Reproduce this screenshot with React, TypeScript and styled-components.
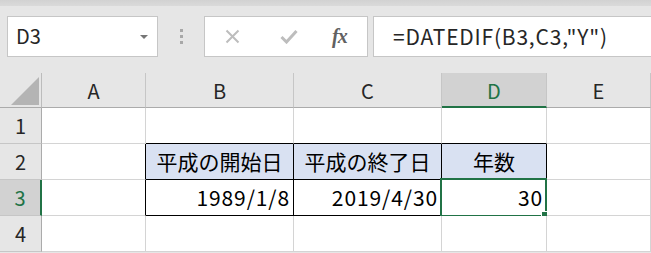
import React from 'react'
import styled, { createGlobalStyle } from 'styled-components'

const GlobalStyle = createGlobalStyle`
    html, body {
        margin: 0;
        padding: 0;
        background: #e6e6e6;
        overflow: hidden;
    }
    body {
        font-family: 'Noto Sans CJK JP', 'Noto Sans', sans-serif;
    }
`

const GREEN = '#217346'
const FONT = `'Noto Sans CJK JP', 'Noto Sans', sans-serif`

const Window = styled.div`
    width: 651px;
    height: 253px;
    display: flex;
    flex-direction: column;
    background: #e6e6e6;
`

const TopStrip = styled.div`
    height: 6px;
    background: linear-gradient(#d2d2d2, #dadada);
`

const FormulaBar = styled.div`
    display: flex;
    align-items: center;
    height: 41px;
    margin-top: 10px;
    margin-bottom: 16px;
    padding-left: 7px;
`

const NameBox = styled.div`
    box-sizing: border-box;
    width: 151px;
    height: 41px;
    background: #fff;
    border: 1px solid #c6c6c6;
    display: flex;
    align-items: center;
    justify-content: space-between;
    padding: 0 9px 2px 8px;
    font-family: ${FONT};
    font-size: 20px;
    color: #262626;
`

const DropArrow = styled.span`
    width: 0;
    height: 0;
    border-left: 4px solid transparent;
    border-right: 4px solid transparent;
    border-top: 4px solid #767676;
    margin-top: 2px;
`

const Grip = styled.div`
    width: 46px;
    display: flex;
    flex-direction: column;
    align-items: center;
    gap: 3px;
    & span {
        width: 3px;
        height: 3px;
        background: #a8a8a8;
    }
`

const ButtonBox = styled.div`
    box-sizing: border-box;
    width: 164px;
    height: 41px;
    background: #fff;
    border: 1px solid #c6c6c6;
    display: flex;
    align-items: center;
    padding-left: 20px;
`

const IconSlot = styled.div<{ $w: number }>`
    width: ${({ $w }) => $w}px;
    display: flex;
    align-items: center;
    justify-content: flex-start;
`

const Fx = styled.span`
    font-family: 'Liberation Serif', 'DejaVu Serif', serif;
    font-style: italic;
    font-weight: bold;
    font-size: 20px;
    color: #616161;
    letter-spacing: -1px;
`

const FormulaInput = styled.div`
    box-sizing: border-box;
    flex: 1;
    height: 41px;
    margin-left: 5px;
    background: #fff;
    border: 1px solid #c6c6c6;
    border-right: none;
    display: flex;
    align-items: center;
    padding: 0 0 2px 19px;
    font-family: ${FONT};
    font-size: 21px;
    letter-spacing: 0.8px;
    color: #262626;
`

const Sheet = styled.div`
    display: grid;
    grid-template-columns: 42px 104px 148px 148px 105px 104px;
    grid-template-rows: 35px repeat(4, 36px);
    background: #fff;
`

const Corner = styled.div`
    box-sizing: border-box;
    background: #e6e6e6;
    border-right: 1px solid #bcbcbc;
    border-bottom: 1px solid #ababab;
    display: flex;
    align-items: flex-end;
    justify-content: flex-end;
    padding: 0 2px 2px 0;
`

const ColHeader = styled.div<{ $active?: boolean }>`
    box-sizing: border-box;
    background: ${({ $active }) => ($active ? '#d2d2d2' : '#e6e6e6')};
    border-right: 1px solid #c6c6c6;
    border-bottom: ${({ $active }) => ($active ? `2px solid ${GREEN}` : '1px solid #ababab')};
    display: flex;
    align-items: center;
    justify-content: center;
    font-family: ${FONT};
    font-size: 20px;
    color: ${({ $active }) => ($active ? GREEN : '#262626')};
    padding-top: ${({ $active }) => ($active ? '1px' : '0')};
`

const RowHeader = styled.div<{ $active?: boolean }>`
    box-sizing: border-box;
    background: ${({ $active }) => ($active ? '#d2d2d2' : '#e6e6e6')};
    border-right: ${({ $active }) => ($active ? `2px solid ${GREEN}` : '1px solid #ababab')};
    border-bottom: 1px solid #c6c6c6;
    display: flex;
    align-items: center;
    justify-content: center;
    font-family: ${FONT};
    font-size: 20px;
    color: ${({ $active }) => ($active ? GREEN : '#262626')};
`

const Cell = styled.div<{ $rb?: boolean; $bb?: boolean; $head?: boolean; $num?: boolean }>`
    position: relative;
    box-sizing: border-box;
    background: ${({ $head }) => ($head ? '#d9e1f2' : '#fff')};
    border-right: 1px solid ${({ $rb }) => ($rb ? '#000' : '#d4d4d4')};
    border-bottom: 1px solid ${({ $bb }) => ($bb ? '#000' : '#d4d4d4')};
    display: flex;
    align-items: center;
    justify-content: ${({ $head, $num }) => ($head ? 'center' : $num ? 'flex-end' : 'flex-start')};
    padding: 0 3px 1px 3px;
    font-family: ${FONT};
    font-size: 21px;
    letter-spacing: ${({ $num }) => ($num ? '0.9px' : '0')};
    color: #000;
    white-space: nowrap;
`

const Selection = styled.div`
    position: absolute;
    left: -2px;
    top: -2px;
    right: -1px;
    bottom: -2px;
    border: 2px solid ${GREEN};
    pointer-events: none;
`

const Handle = styled.div`
    position: absolute;
    right: -4px;
    bottom: -4px;
    width: 6px;
    height: 6px;
    background: ${GREEN};
    border: 1px solid #fff;
`

const columns = ['A', 'B', 'C', 'D', 'E']

export default function App() {
    return (
        <Window>
            <GlobalStyle />
            <TopStrip />
            <FormulaBar>
                <NameBox>
                    <span>D3</span>
                    <DropArrow />
                </NameBox>
                <Grip>
                    <span />
                    <span />
                    <span />
                </Grip>
                <ButtonBox>
                    <IconSlot $w={55}>
                        <svg width="15" height="15" viewBox="0 0 15 15">
                            <path d="M1.5 1.5 L13.5 13.5 M13.5 1.5 L1.5 13.5" stroke="#bdbdbd" strokeWidth="2" fill="none" />
                        </svg>
                    </IconSlot>
                    <IconSlot $w={52}>
                        <svg width="18" height="15" viewBox="0 0 18 15">
                            <path d="M1.5 8 L6.5 13 L16.5 2" stroke="#bdbdbd" strokeWidth="3" fill="none" />
                        </svg>
                    </IconSlot>
                    <IconSlot $w={30}>
                        <Fx>fx</Fx>
                    </IconSlot>
                </ButtonBox>
                <FormulaInput>=DATEDIF(B3,C3,"Y")</FormulaInput>
            </FormulaBar>
            <Sheet>
                <Corner>
                    <svg width="28" height="28" viewBox="0 0 28 28">
                        <polygon points="0,28 28,0 28,28" fill="#b4b4b4" />
                    </svg>
                </Corner>
                {columns.map((c) => (
                    <ColHeader key={c} $active={c === 'D'}>
                        {c}
                    </ColHeader>
                ))}

                <RowHeader>1</RowHeader>
                <Cell />
                <Cell $bb />
                <Cell $bb />
                <Cell $bb />
                <Cell />

                <RowHeader>2</RowHeader>
                <Cell $rb />
                <Cell $head $rb $bb>平成の開始日</Cell>
                <Cell $head $rb $bb>平成の終了日</Cell>
                <Cell $head $rb $bb>年数</Cell>
                <Cell />

                <RowHeader $active>3</RowHeader>
                <Cell $rb />
                <Cell $rb $bb $num>1989/1/8</Cell>
                <Cell $rb $bb $num>2019/4/30</Cell>
                <Cell $rb $bb $num>
                    30
                    <Selection>
                        <Handle />
                    </Selection>
                </Cell>
                <Cell />

                <RowHeader>4</RowHeader>
                <Cell />
                <Cell />
                <Cell />
                <Cell />
                <Cell />
            </Sheet>
        </Window>
    )
}
